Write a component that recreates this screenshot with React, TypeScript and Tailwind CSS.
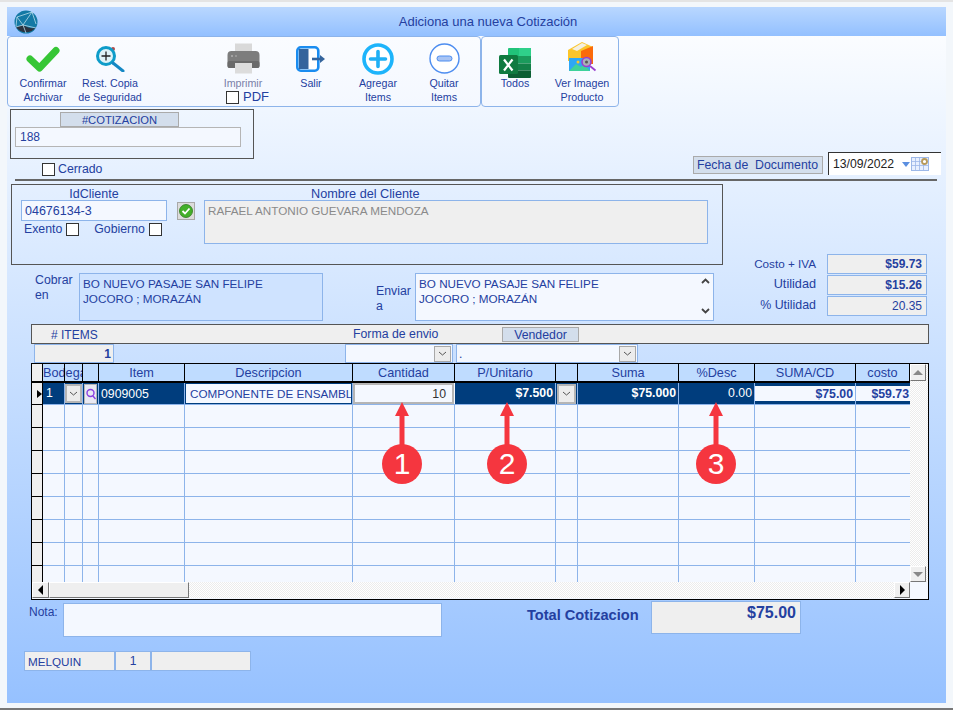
import type { ReactNode } from "react";

const INK = "text-[#2440a0]";

function Check({ className = "" }: { className?: string }) {
  return <span className={`block w-[13px] h-[13px] bg-white border border-[#333] shrink-0 ${className}`} />;
}

function Combo({ className = "" }: { className?: string }) {
  return (
    <span className={`flex items-center justify-center bg-[#ececec] border border-[#a8a8a8] ${className}`}>
      <svg width="9" height="5" viewBox="0 0 9 5" fill="none">
        <path d="M1 1l3.5 3L8 1" stroke="#555" strokeWidth="1" />
      </svg>
    </span>
  );
}

function ToolButton({ icon, lines, width, ml }: { icon: ReactNode; lines: string[]; width: string; ml: string }) {
  return (
    <div className={`flex flex-col items-center shrink-0 ${width} ${ml}`}>
      <div className="h-[39px] w-full flex items-end justify-center">{icon}</div>
      <div className={`text-[10.700px] leading-[14px] text-center whitespace-nowrap ${INK}`}>
        {lines.map((l) => (
          <div key={l}>{l}</div>
        ))}
      </div>
    </div>
  );
}

function Logo() {
  return (
    <svg width="24" height="24" viewBox="0 0 24 24" className="mt-[3px] ml-[7px]">
      <circle cx="12" cy="12" r="11.5" fill="#1479a5" />
      <path d="M2 17a12 12 0 0 0 20 0c-4 3-8 0-11-1-3-1-6 0-9 1z" fill="#2b3340" />
      <path d="M3 7l15-5M3 7l6 8 13 3M9 15l9-13 4 12M9 15l3 8M3 7l-1 9M9 15l-7 2" stroke="#b8dcea" strokeWidth="0.8" fill="none" />
    </svg>
  );
}

function IconCheck() {
  return (
    <svg width="34" height="26" viewBox="0 0 34 26" className="mb-[4px]">
      <path d="M4 13l9.500 9L30 4.500" fill="none" stroke="#36c636" strokeWidth="7" strokeLinecap="round" strokeLinejoin="round" />
    </svg>
  );
}

function IconSearch() {
  return (
    <svg width="30" height="27" viewBox="0 0 30 27" className="mb-[4px]">
      <circle cx="18" cy="4" r="2" fill="#b04a4a" />
      <circle cx="11" cy="11" r="8.500" fill="#dff3f8" stroke="#0e9cc9" strokeWidth="3" />
      <path d="M11 6.500v9M6.500 11h9" stroke="#222" strokeWidth="1.300" />
      <path d="M18 18l10 8" stroke="#1588c4" strokeWidth="3" strokeLinecap="round" />
    </svg>
  );
}

function IconPrinter() {
  return (
    <svg width="33" height="31" viewBox="0 0 33 31" className="mb-[2px]">
      <rect x="8" y="0.500" width="17" height="9" fill="#d9d9d9" />
      <path d="M0.500 12a4 4 0 0 1 4-4h24a4 4 0 0 1 4 4v11a2 2 0 0 1-2 2h-28a2 2 0 0 1-2-2z" fill="#7d7d7d" />
      <rect x="0.500" y="18" width="32" height="7" rx="2" fill="#6a6a6a" />
      <rect x="8" y="20" width="17" height="10.500" fill="#dcdcdc" />
      <circle cx="5" cy="13" r="1" fill="#b0b0b0" />
      <circle cx="9" cy="13" r="1" fill="#a0a0a0" />
    </svg>
  );
}

function IconExit() {
  return (
    <svg width="30" height="26" viewBox="0 0 30 26" className="mb-[4px]">
      <rect x="1.300" y="1.300" width="21" height="23.400" rx="3.500" fill="#fff" stroke="#1a8cf0" strokeWidth="2.600" />
      <path d="M3 3h9.500v20H3z" fill="#34649c" />
      <path d="M16 13h10" stroke="#34649c" strokeWidth="2.600" />
      <path d="M24 9l5 4-5 4z" fill="#34649c" />
    </svg>
  );
}

function IconPlus() {
  return (
    <svg width="32" height="32" viewBox="0 0 32 32" className="mb-[1px]">
      <circle cx="16" cy="16" r="14" fill="#fff" stroke="#1db4fb" strokeWidth="3.600" />
      <path d="M16 8.500v15M8.500 16h15" stroke="#1fb0f5" strokeWidth="3.600" strokeLinecap="round" />
    </svg>
  );
}

function IconMinus() {
  return (
    <svg width="31" height="31" viewBox="0 0 31 31" className="mb-[2px]">
      <circle cx="15.500" cy="15.500" r="14.500" fill="#fff" stroke="#4d8df0" strokeWidth="1.400" />
      <rect x="8" y="13" width="15" height="5" rx="2.500" fill="#a8c4f4" stroke="#4d8df0" strokeWidth="1" />
    </svg>
  );
}

function IconExcel() {
  return (
    <svg width="32" height="30" viewBox="0 0 32 30" className="mb-[-2px]">
      <path d="M9 1a1 1 0 0 1 1-1h21a1 1 0 0 1 1 1v7H9z" fill="#21c37a" />
      <rect x="9" y="8" width="23" height="7.500" fill="#1a9b5c" />
      <rect x="9" y="15.500" width="23" height="7" fill="#128048" />
      <path d="M9 22.500h23V29a1 1 0 0 1-1 1H10a1 1 0 0 1-1-1z" fill="#0c5f34" />
      <rect x="20" y="0" width="12" height="8" fill="#2fd08a" />
      <rect x="0" y="7" width="19" height="19" rx="1.500" fill="#0f7a40" />
      <path d="M5 11.500l8.500 11M13.500 11.500l-8.500 11" stroke="#fff" strokeWidth="2.200" />
    </svg>
  );
}

function IconImage() {
  return (
    <svg width="31" height="30" viewBox="0 0 31 30" className="mb-[4px]">
      <path d="M1 8l14-8 11 5v14H1z" fill="#fbc52b" />
      <path d="M5 7l10-6 5 2-10 6z" fill="#f4f0e0" />
      <path d="M14 9l12-5v18H14z" fill="#fb6a0a" />
      <rect x="2" y="16" width="21" height="13" fill="#2ea7f5" />
      <path d="M2 29l7-7 5 3 3-3 6 7z" fill="#3fd29a" />
      <circle cx="11" cy="20" r="1.500" fill="#fbc52b" />
      <circle cx="19.500" cy="20" r="4.500" fill="#a9b0b8" stroke="#9a3fd0" strokeWidth="1.600" />
      <circle cx="19.500" cy="20" r="1.500" fill="#555" />
      <path d="M23 24l5.500 4.500" stroke="#9a3fd0" strokeWidth="1.800" />
    </svg>
  );
}

function CalendarIcon() {
  return (
    <svg width="18" height="14" viewBox="0 0 18 14">
      <rect x="0.500" y="0.500" width="17" height="13" fill="#e8f0ff" stroke="#9db8e8" />
      <path d="M0 4.500h18M0 8.500h18M4.500 0v14M8.500 0v14M12.500 0v14" stroke="#9db8e8" strokeWidth="0.800" />
      <circle cx="13.500" cy="4.500" r="2.500" fill="#fff" stroke="#b89a5a" strokeWidth="1.800" />
    </svg>
  );
}

function Marker({ n, x }: { n: number; x: string }) {
  return (
    <div className={`absolute top-[38px] ${x} w-[40px] flex flex-col items-center`}>
      <svg width="14" height="44" viewBox="0 0 14 44" className="block">
        <path d="M7 0l7 14H9.500v30h-5V14H0z" fill="#f5363f" />
      </svg>
      <div className="w-[40px] h-[40px] rounded-full bg-[#f5363f] text-white flex items-center justify-center text-[30px] leading-none mt-[-2px]">
        {n}
      </div>
    </div>
  );
}

const COLS = "grid-cols-[11px_22px_18px_16px_86px_168px_102px_101px_22px_101px_76px_101px_54px]";

const HEADERS = ["Item", "Descripcion", "Cantidad", "P/Unitario", "", "Suma", "%Desc", "SUMA/CD", "costo"];

function GridHeader() {
  return (
    <div className={`grid ${COLS} h-[19px] border-b-2 border-black text-[12.700px] ${INK}`}>
      <div className="bg-[#efefef] border-r border-black" />
      <div className="relative col-span-2 bg-[#bfdcff] border-r border-black overflow-hidden whitespace-nowrap leading-[18px]">
        Bodega
        <span className="absolute left-[21px] top-0 w-px h-full bg-black" />
      </div>
      <div className="bg-[#bfdcff] border-r border-black" />
      {HEADERS.map((h, i) => (
        <div key={i} className="bg-[#bfdcff] border-r border-black text-center leading-[18px] overflow-hidden whitespace-nowrap">
          {h}
        </div>
      ))}
    </div>
  );
}

function SelectedRow() {
  const navy = "bg-[#003d7d] border-r border-[#8db4ea] text-white h-full flex items-center overflow-hidden whitespace-nowrap";
  return (
    <div className={`grid ${COLS} h-[23px] border-b border-[#8db4ea] text-[12.300px]`}>
      <div className="bg-[#efefef] border-r border-black border-b border-b-black mb-[-1px] flex items-center">
        <span className="w-0 h-0 border-y-[4px] border-y-transparent border-l-[5px] border-l-black ml-[5px]" />
      </div>
      <div className={`${navy} pl-[3px]`}>1</div>
      <div className={`${navy} justify-center`}>
        <Combo className="w-[17px] h-[19px] border-2 border-[#b5b5b5]" />
      </div>
      <div className={`${navy} justify-center`}>
        <span className="flex items-center justify-center w-[13px] h-[20px] bg-[#e9e9f3] border border-[#b5b5b5]">
          <svg width="10" height="12" viewBox="0 0 10 12" fill="none">
            <circle cx="4.500" cy="5" r="3.500" stroke="#8a3fe0" strokeWidth="1.400" />
            <path d="M7 8l2.500 3" stroke="#8a3fe0" strokeWidth="1.400" />
          </svg>
        </span>
      </div>
      <div className={`${navy} pl-[2px] pt-[1px]`}>0909005</div>
      <div className={`${navy} p-[1px]`}>
        <div className={`bg-[#f4f8ff] w-full h-[19px] pl-[4px] leading-[19px] overflow-hidden text-[11.700px] ${INK}`}>COMPONENTE DE ENSAMBLE</div>
      </div>
      <div className="bg-[#f4f8ff] border-2 border-[#b5b5b5] h-[21px] text-right pr-[6px] leading-[18px] text-[#333] mr-[1px]">10</div>
      <div className={`${navy} justify-end pr-[2px] font-bold`}>$7.500</div>
      <div className={`${navy} justify-center`}>
        <Combo className="w-[19px] h-[20px] border-2 border-[#b5b5b5]" />
      </div>
      <div className={`${navy} justify-end pr-[2px] font-bold`}>$75.000</div>
      <div className={`${navy} justify-end pr-[2px]`}>0.00</div>
      <div className="h-full bg-[#003d7d] border-r border-[#8db4ea] pt-[3px]">
        <div className={`bg-[#f4f8ff] h-[15px] text-right pr-[2px] leading-[16px] font-bold ${INK}`}>$75.00</div>
      </div>
      <div className="h-full bg-[#003d7d] pt-[3px]">
        <div className={`bg-[#f4f8ff] h-[15px] text-right pr-[1px] leading-[16px] font-bold ${INK}`}>$59.73</div>
      </div>
    </div>
  );
}

function EmptyRow() {
  return (
    <div className={`grid ${COLS} h-[23px] shrink-0 border-b border-[#8db4ea]`}>
      {Array.from({ length: 13 }).map((_, i) => (
        <div key={i} className={i === 0 ? "bg-[#efefef] border-r border-black border-b border-b-black mb-[-1px]" : "bg-[#f4f8ff] border-r border-[#8db4ea] last:border-r-0"} />
      ))}
    </div>
  );
}

function ScrollBtn({ dir, className = "" }: { dir: "up" | "down" | "left" | "right"; className?: string }) {
  const arrow = {
    up: "border-x-[5px] border-x-transparent border-b-[5px] border-b-[#888]",
    down: "border-x-[5px] border-x-transparent border-t-[5px] border-t-[#888]",
    left: "border-y-[5px] border-y-transparent border-r-[5px] border-r-black",
    right: "border-y-[5px] border-y-transparent border-l-[5px] border-l-black",
  }[dir];
  return (
    <div className={`flex items-center justify-center bg-[#efefef] border border-t-white border-l-white border-r-[#777] border-b-[#777] shrink-0 ${className}`}>
      <span className={`w-0 h-0 ${arrow}`} />
    </div>
  );
}

const TRACK = "bg-[repeating-conic-gradient(#ececec_0_25%,#ffffff_0_50%)] bg-[length:2px_2px]";

function DataGrid() {
  return (
    <div className="relative ml-[24px] w-[898px] h-[237px] border-[1.500px] border-black flex flex-col bg-[#f4f8ff]">
      <div className="flex h-[218px]">
        <div className="w-[878px] flex flex-col overflow-hidden">
          <GridHeader />
          <SelectedRow />
          {Array.from({ length: 8 }).map((_, i) => (
            <EmptyRow key={i} />
          ))}
        </div>
        <div className={`flex-1 flex flex-col justify-between ${TRACK}`}>
          <ScrollBtn dir="up" className="h-[17px] w-[16px]" />
          <ScrollBtn dir="down" className="h-[16px] w-[16px]" />
        </div>
      </div>
      <div className="flex h-[16px]">
        <ScrollBtn dir="left" className="w-[17px]" />
        <div className="w-[140px] bg-[#efefef] border border-t-white border-l-white border-r-[#777] border-b-[#777]" />
        <div className={`w-[705px] ${TRACK}`} />
        <ScrollBtn dir="right" className="w-[16px]" />
      </div>
      <Marker n={1} x="left-[350px]" />
      <Marker n={2} x="left-[455px]" />
      <Marker n={3} x="left-[664px]" />
    </div>
  );
}

function Stat({ label, value, bold, size }: { label: string; value: string; bold?: boolean; size: string }) {
  return (
    <div className="flex items-center h-[21px]">
      <span className={`w-[93px] text-right ${size} ${INK}`}>{label}</span>
      <span className={`ml-[11px] w-[100px] h-[20px] bg-[#efefef] border border-[#8db4ea] text-right pr-[4px] leading-[19px] text-[12px] ${INK} ${bold ? "font-bold" : ""}`}>
        {value}
      </span>
    </div>
  );
}

export default function App() {
  return (
    <div className="w-[953px] h-[710px] overflow-hidden bg-[#f3f7fb] border-t-2 border-b-2 border-t-[#e4e4e4] border-b-[#777] pt-[5px] px-[7px]" style={{ fontFamily: '"Liberation Sans", Arial, sans-serif' }}>
      <div className="w-[939px] h-[696px] bg-gradient-to-b from-white to-[#96c1ff]">
        {/* TITLE */}
        <div className="h-[29px] flex bg-gradient-to-b from-[#b9d7ff] to-[#93c0ff]">
          <Logo />
          <div className={`flex-1 text-center text-[13px] leading-[30px] pr-[8px] ${INK}`}>Adiciona una nueva Cotización</div>
        </div>

        {/* TOOLBAR */}
        <div className="flex h-[71px]">
          <div className="w-[474px] border border-[#8db4ea] rounded-[4px] flex bg-gradient-to-b from-[#fafcff] to-[#f4f8ff]">
            <ToolButton icon={<IconCheck />} lines={["Confirmar", "Archivar"]} width="w-[66px]" ml="ml-[2px]" />
            <ToolButton icon={<IconSearch />} lines={["Rest. Copia", "de Seguridad"]} width="w-[66px]" ml="ml-[1px]" />
            <div className="ml-[67px] w-[66px] shrink-0 flex flex-col items-center">
              <div className="h-[39px] w-full flex items-end justify-center">
                <IconPrinter />
              </div>
              <div className="text-[10.700px] leading-[14px] text-[#7a7fa8]">Imprimir</div>
              <div className={`self-start ml-[16px] flex items-center gap-[4px] text-[13px] leading-[14px] ${INK}`}>
                <Check />
                PDF
              </div>
            </div>
            <ToolButton icon={<IconExit />} lines={["Salir"]} width="w-[66px]" ml="ml-[2px]" />
            <ToolButton icon={<IconPlus />} lines={["Agregar", "Items"]} width="w-[66px]" ml="ml-[1px]" />
            <ToolButton icon={<IconMinus />} lines={["Quitar", "Items"]} width="w-[66px]" ml="ml-0" />
          </div>
          <div className="w-[138px] border border-[#8db4ea] rounded-[4px] flex bg-gradient-to-b from-[#fafcff] to-[#f4f8ff]">
            <ToolButton icon={<IconExcel />} lines={["Todos"]} width="w-[66px]" ml="ml-0" />
            <ToolButton icon={<IconImage />} lines={["Ver Imagen", "Producto"]} width="w-[68px]" ml="ml-0" />
          </div>
        </div>

        {/* COTIZACION + FECHA */}
        <div className="flex h-[72px]">
          <div className="ml-[3px] mt-[2px] w-[244px]">
            <div className="h-[50px] border border-[#555] pl-[4px] pt-[2px]">
              <div className={`ml-[45px] w-[119px] h-[15px] bg-[#d3deec] border border-[#aaa] text-center text-[11.200px] leading-[14px] ${INK}`}>#COTIZACION</div>
              <div className={`w-[226px] h-[20px] bg-[#f4f8ff] border border-[#b5b5b5] pl-[4px] leading-[19px] text-[12px] ${INK}`}>188</div>
            </div>
            <div className={`ml-[32px] mt-[1px] flex items-center gap-[3px] text-[12.300px] ${INK}`}>
              <Check />
              Cerrado
            </div>
          </div>
          <div className="ml-[439px] mt-[45px] flex items-start">
            <div className={`mt-[4px] w-[130px] h-[18px] bg-[#d3deec] border border-[#aaa] pl-[3px] text-[12.300px] leading-[17px] whitespace-pre ${INK}`}>Fecha de  Documento</div>
            <div className="ml-[5px] w-[113px] h-[23px] bg-white border-t border-l border-[#333] flex items-center pl-[4px] text-[12.200px] text-[#222]">
              13/09/2022
              <span className="ml-[8px] w-0 h-0 border-x-[4px] border-x-transparent border-t-[5px] border-t-[#5b8fe0]" />
              <span className="ml-[1px]">
                <CalendarIcon />
              </span>
            </div>
          </div>
        </div>

        {/* separator */}
        <div className="ml-[8px] w-[922px] h-[2px] bg-[#666]" />

        {/* CLIENTE */}
        <div className="flex">
          <div className="w-[716px] shrink-0">
            <div className="ml-[4px] mt-[3px] w-[712px] h-[81px] border border-[#555] flex pl-[9px] pt-[2px]">
              <div className="w-[146px] shrink-0">
                <div className={`text-center text-[12.500px] h-[13px] leading-[15px] ${INK}`}>IdCliente</div>
                <div className={`h-[21px] bg-[#f4f8ff] border border-[#8db4ea] pl-[3px] text-[12.500px] leading-[20px] ${INK}`}>04676134-3</div>
                <div className={`flex items-center text-[12.300px] mt-[-1px] pl-[3px] ${INK}`}>
                  Exento
                  <Check className="ml-[4px]" />
                  <span className="ml-[15px]">Gobierno</span>
                  <Check className="ml-[4px]" />
                </div>
              </div>
              <div className="ml-[10px] mt-[15px] w-[18px] h-[18px] shrink-0 bg-[#dcdcdc] border border-[#a8a8a8] flex items-center justify-center">
                <svg width="14" height="14" viewBox="0 0 14 14">
                  <circle cx="7" cy="7" r="6.500" fill="#43b02a" stroke="#2c7a1a" strokeWidth="0.800" />
                  <path d="M3.500 7l2.500 2.500 4.500-5" fill="none" stroke="#fff" strokeWidth="1.800" />
                </svg>
              </div>
              <div className="ml-[9px] w-[504px]">
                <div className={`pl-[107px] text-[12.700px] h-[13px] leading-[15px] ${INK}`}>Nombre del Cliente</div>
                <div className="h-[44px] bg-[#efefef] border border-[#8db4ea] pl-[3px] pt-[3px] text-[11.700px] leading-[14px] text-[#8a8a8a]">RAFAEL ANTONIO GUEVARA MENDOZA</div>
              </div>
            </div>
            <div className="flex mt-[8px]">
              <div className={`ml-[28px] w-[44px] text-[12.300px] leading-[15px] ${INK}`}>
                Cobrar
                <br />
                en
              </div>
              <div className={`w-[244px] h-[48px] bg-[#cfe3ff] border border-[#8db4ea] pl-[3px] pt-[2px] text-[11.700px] leading-[15px] ${INK}`}>
                BO NUEVO PASAJE SAN FELIPE
                <br />
                JOCORO ; MORAZÁN
              </div>
              <div className={`ml-[53px] mt-[11px] w-[39px] text-[12.300px] leading-[15px] ${INK}`}>
                Enviar
                <br />
                a
              </div>
              <div className={`w-[299px] h-[48px] bg-[#f4f8ff] border border-[#8db4ea] pl-[3px] pt-[2px] text-[11.700px] leading-[15px] flex justify-between ${INK}`}>
                <div>
                  BO NUEVO PASAJE SAN FELIPE
                  <br />
                  JOCORO ; MORAZÁN
                </div>
                <div className="w-[16px] h-full flex flex-col justify-between items-center py-[4px] mt-[-2px]">
                  <svg width="9" height="6" viewBox="0 0 9 6" fill="none">
                    <path d="M1 5l3.500-3.500L8 5" stroke="#444" strokeWidth="1.800" />
                  </svg>
                  <svg width="9" height="6" viewBox="0 0 9 6" fill="none">
                    <path d="M1 1l3.500 3.500L8 1" stroke="#444" strokeWidth="1.800" />
                  </svg>
                </div>
              </div>
            </div>
          </div>
          <div className="mt-[72px] flex flex-col">
            <Stat label="Costo + IVA" value="$59.73" bold size="text-[11.700px]" />
            <Stat label="Utilidad" value="$15.26" bold size="text-[12.700px]" />
            <Stat label="% Utilidad" value="20.35" size="text-[12.400px]" />
          </div>
        </div>

        {/* BARRA ITEMS */}
        <div className={`relative ml-[24px] mt-[3px] w-[898px] h-[20px] bg-[#efefef] border border-[#555] flex items-center ${INK}`}>
          <span className="ml-[19px] w-[302px] text-[12px] pt-[1px]"># ITEMS</span>
          <span className="w-[149px] text-[12.300px]">Forma de envio</span>
          <span className="w-[77px] h-[15px] bg-[#d3deec] border border-[#aaa] text-center text-[12.300px] leading-[14px]">Vendedor</span>
        </div>
        <div className={`flex ml-[27px] h-[19px] text-[12px] ${INK}`}>
          <div className="w-[80px] h-[19px] bg-[#efefef] border border-[#8db4ea] text-right pr-[2px] font-bold leading-[18px]">1</div>
          <div className="ml-[231px] w-[108px] h-[19px] bg-[#f4f8ff] border border-[#8db4ea] flex justify-end items-center">
            <Combo className="w-[17px] h-[16px] mr-[1px]" />
          </div>
          <div className="ml-[3px] w-[182px] h-[19px] bg-[#f4f8ff] border border-[#8db4ea] flex justify-between items-center pl-[2px]">
            .
            <Combo className="w-[17px] h-[16px] mr-[1px]" />
          </div>
        </div>

        <DataGrid />

        {/* PIE */}
        <div className="flex h-[50px]">
          <span className={`ml-[22px] mt-[3px] w-[34px] text-[12px] ${INK}`}>Nota:</span>
          <div className="mt-[3px] w-[379px] h-[34px] bg-[#f4f8ff] border border-[#8db4ea]" />
          <span className={`ml-[85px] mt-[5px] w-[124px] text-[14.600px] font-bold whitespace-nowrap ${INK}`}>Total Cotizacion</span>
          <div className={`w-[150px] h-[33px] mt-[1px] bg-[#efefef] border border-[#8db4ea] text-right pr-[4px] text-[16px] font-bold leading-[22px] ${INK}`}>$75.00</div>
        </div>
        <div className={`ml-[17px] mt-[1px] flex text-[11.700px] h-[20px] ${INK}`}>
          <div className="w-[91px] bg-[#efefef] border border-[#8db4ea] pl-[3px] leading-[19px]">MELQUIN</div>
          <div className="w-[36px] bg-[#efefef] border border-[#8db4ea] text-center leading-[19px] text-[12px]">1</div>
          <div className="w-[100px] bg-[#efefef] border border-[#8db4ea]" />
        </div>
      </div>
    </div>
  );
}
